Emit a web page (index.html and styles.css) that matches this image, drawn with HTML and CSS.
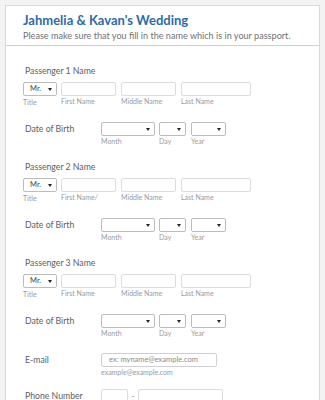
FILE: index.html
```html
<!DOCTYPE html>
<html>
    <head>
        <meta charset="UTF-8">
        <title>Jahmelia &amp; Kavan's Wedding</title>
        <link rel="stylesheet" href="styles.css">
    </head>
    <body>
        <!-- form card -->
        <div class="card">
            <div class="card-head">
                <h1 class="form-title">Jahmelia &amp; Kavan's Wedding</h1>
                <p class="form-sub">Please make sure that you fill in the name which is in your passport.</p>
            </div>
            <div class="card-body">
                <!-- passenger 1 -->
                <div class="name-field">
                    <div class="field-label">Passenger 1 Name</div>
                    <div class="name-row">
                        <div class="col col-title"><div class="sel">Mr.<span class="arrow"></span></div><span class="sub">Title</span></div>
                        <div class="col col-first"><div class="box"></div><span class="sub">First Name</span></div>
                        <div class="col col-middle"><div class="box"></div><span class="sub">Middle Name</span></div>
                        <div class="col col-last"><div class="box"></div><span class="sub">Last Name</span></div>
                    </div>
                </div>
                <div class="row-field">
                    <div class="side-label">Date of Birth</div>
                    <div class="date-row">
                        <div class="col col-month"><div class="sel"><span class="arrow"></span></div><span class="sub">Month</span></div>
                        <div class="col col-day"><div class="sel"><span class="arrow"></span></div><span class="sub">Day</span></div>
                        <div class="col col-year"><div class="sel"><span class="arrow"></span></div><span class="sub">Year</span></div>
                    </div>
                </div>

                <!-- passenger 2 -->
                <div class="name-field">
                    <div class="field-label">Passenger 2 Name</div>
                    <div class="name-row">
                        <div class="col col-title"><div class="sel">Mr.<span class="arrow"></span></div><span class="sub">Title</span></div>
                        <div class="col col-first"><div class="box"></div><span class="sub">First Name/</span></div>
                        <div class="col col-middle"><div class="box"></div><span class="sub">Middle Name</span></div>
                        <div class="col col-last"><div class="box"></div><span class="sub">Last Name</span></div>
                    </div>
                </div>
                <div class="row-field">
                    <div class="side-label">Date of Birth</div>
                    <div class="date-row">
                        <div class="col col-month"><div class="sel"><span class="arrow"></span></div><span class="sub">Month</span></div>
                        <div class="col col-day"><div class="sel"><span class="arrow"></span></div><span class="sub">Day</span></div>
                        <div class="col col-year"><div class="sel"><span class="arrow"></span></div><span class="sub">Year</span></div>
                    </div>
                </div>

                <!-- passenger 3 -->
                <div class="name-field">
                    <div class="field-label">Passenger 3 Name</div>
                    <div class="name-row">
                        <div class="col col-title"><div class="sel">Mr.<span class="arrow"></span></div><span class="sub">Title</span></div>
                        <div class="col col-first"><div class="box"></div><span class="sub">First Name</span></div>
                        <div class="col col-middle"><div class="box"></div><span class="sub">Middle Name</span></div>
                        <div class="col col-last"><div class="box"></div><span class="sub">Last Name</span></div>
                    </div>
                </div>
                <div class="row-field">
                    <div class="side-label">Date of Birth</div>
                    <div class="date-row">
                        <div class="col col-month"><div class="sel"><span class="arrow"></span></div><span class="sub">Month</span></div>
                        <div class="col col-day"><div class="sel"><span class="arrow"></span></div><span class="sub">Day</span></div>
                        <div class="col col-year"><div class="sel"><span class="arrow"></span></div><span class="sub">Year</span></div>
                    </div>
                </div>

                <!-- contact -->
                <div class="row-field">
                    <div class="side-label">E-mail</div>
                    <div class="col col-email"><div class="box input">ex: myname@example.com</div><span class="sub">example@example.com</span></div>
                </div>
                <div class="row-field phone">
                    <div class="side-label">Phone Number</div>
                    <div class="phone-row">
                        <div class="box col-area"></div>
                        <span class="dash">-</span>
                        <div class="box col-phone"></div>
                    </div>
                </div>
            </div>
        </div>
    </body>
</html>
```

FILE: styles.css
```css
*{
    margin: 0;
    padding: 0;
    box-sizing: border-box;
}
body{
    background-color: #f3f3f4;
    font-family: "Lato", "Open Sans", sans-serif;
    color: #606066;
    height: 400px;
    overflow: hidden;
}
.card{
    margin: 5px 5px 0;
    background-color: #fff;
    border: 1px solid #cfdbe8;
    border-bottom: none;
    height: 420px;
    overflow: hidden;
}
.card-head{
    padding: 6px 10px 4px 17px;
    border-bottom: 1px solid #c3d3e4;
    height: 40px;
}
.form-title{
    font-size: 13px;
    line-height: 16px;
    font-weight: 700;
    color: #2f6aa6;
}
.form-sub{
    font-size: 9.1px;
    line-height: 15px;
    color: #717176;
    white-space: nowrap;
}
.card-body{
    padding: 0 10px 0 17px;
}
.name-field{
    margin-top: 19px;
}
.name-field + .row-field,
.row-field + .name-field,
.row-field + .row-field{
    margin-top: 15px;
}
.field-label{
    font-size: 8.7px;
    line-height: 12px;
    margin-bottom: 5px;
    padding-left: 2px;
}
.name-row,
.date-row,
.phone-row{
    display: flex;
}
.col{
    display: flex;
    flex-direction: column;
}
.sub{
    font-size: 7px;
    line-height: 10px;
    color: #9a9a9e;
    white-space: nowrap;
}
.box,
.sel{
    height: 14px;
    border: 1px solid #dcdcde;
    border-radius: 2px;
    background: #fff;
}
.sel{
    position: relative;
    border-color: #bcbcc0;
    font-size: 7.5px;
    line-height: 12px;
    padding-left: 6px;
    color: #444;
}
.arrow{
    position: absolute;
    right: 4px;
    top: 5px;
    border-left: 2px solid transparent;
    border-right: 2px solid transparent;
    border-top: 3px solid #222;
}
.col-title{ width: 34px; margin-right: 4px; }
.col-title .sub{ padding-top: 1px; }
.col-first{ width: 55px; margin-right: 5px; }
.col-middle{ width: 55px; margin-right: 5px; }
.col-last{ width: 70px; }
.row-field{
    display: flex;
    align-items: flex-start;
}
.side-label{
    width: 78px;
    font-size: 8.7px;
    line-height: 14px;
    padding-left: 2px;
}
.col-month{ width: 54px; margin-right: 4px; }
.col-day{ width: 27px; margin-right: 5px; }
.col-year{ width: 35px; }
.col-email{ width: 116px; }
.input{
    font-size: 7.5px;
    line-height: 12px;
    padding-left: 7px;
    color: #8a8a8e;
    border-color: #cfcfd2;
}
.row-field.phone{
    margin-top: 12px;
}
.col-area{ width: 27px; }
.col-phone{ width: 85px; }
.dash{
    width: 10px;
    text-align: center;
    font-size: 8px;
    line-height: 14px;
    color: #888;
}
```
